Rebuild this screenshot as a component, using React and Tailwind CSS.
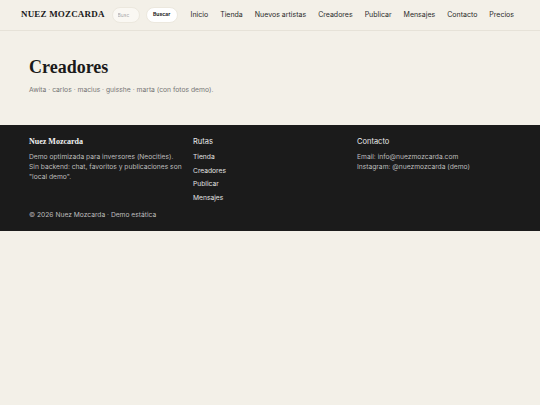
const serif = { fontFamily: '"Liberation Serif", "DejaVu Serif", serif' }

const navLinks = ['Inicio', 'Tienda', 'Nuevos artistas', 'Creadores', 'Publicar', 'Mensajes', 'Contacto', 'Precios']

function Header() {
  return (
    <header className="h-[31px] border-b border-[#e6e2d8] flex items-center pl-[21px] pr-[26px]">
      <a className="font-bold text-[9px] tracking-[0.02em] text-[#1a1a1a] whitespace-nowrap" style={serif}>
        NUEZ MOZCARDA
      </a>
      <div className="flex items-center ml-[7px] gap-[6px]">
        <input
          placeholder="Busc"
          className="w-[28px] h-[16px] rounded-full bg-[#faf8f3] border border-[#ece8de] px-[5px] text-[5px] text-[#999] placeholder:text-[#aaa] outline-none"
        />
        <button className="h-[16px] w-[32px] rounded-full bg-white border border-[#ece8de] text-[5px] font-bold text-[#1a1a1a]">
          Buscar
        </button>
      </div>
      <nav className="flex items-center ml-auto gap-[12px] text-[7px] text-[#2a2a2a]">
        {navLinks.map((l) => (
          <a key={l} className="whitespace-nowrap">{l}</a>
        ))}
      </nav>
    </header>
  )
}

function Footer() {
  return (
    <footer className="bg-[#1b1b1b] text-[#bdbdbd] px-[29px] pt-[12px] pb-[11px]">
      <div className="grid grid-cols-3 gap-[10px]">
        <div>
          <h3 className="text-[8px] font-bold text-[#f2f2f2] leading-[10px] mb-[5px]" style={serif}>Nuez Mozcarda</h3>
          <p className="text-[6.7px] leading-[10px] text-[#bdbdbd]">
            Demo optimizada para inversores (Neocities).
            <br />
            Sin backend: chat, favoritos y publicaciones son "local demo".
          </p>
        </div>
        <div>
          <h3 className="text-[7.5px] text-[#eaeaea] leading-[10px] mb-[4px]">Rutas</h3>
          <ul className="text-[6.7px] text-[#e2e2e2]">
            {['Tienda', 'Creadores', 'Publicar', 'Mensajes'].map((r) => (
              <li key={r} className="leading-[13.5px]">{r}</li>
            ))}
          </ul>
        </div>
        <div>
          <h3 className="text-[7.5px] text-[#eaeaea] leading-[10px] mb-[5px]">Contacto</h3>
          <p className="text-[6.7px] leading-[10px]">
            Email: info@nuezmozcarda.com
            <br />
            Instagram: @nuezmozcarda (demo)
          </p>
        </div>
      </div>
      <p className="mt-[5px] text-[6.7px] leading-[10px]">© 2026 Nuez Mozcarda · Demo estática</p>
    </footer>
  )
}

export default function App() {
  return (
    <div className="min-h-[405px] bg-[#f3f0e8]" style={{ fontFamily: 'Inter, "Liberation Sans", sans-serif' }}>
      <Header />
      <main className="px-[29px] pt-[24px] pb-[30px]">
        <h1 className="text-[18px] font-bold text-[#1a1a1a] leading-[24px]" style={serif}>Creadores</h1>
        <p className="mt-[6px] text-[6.75px] text-[#777] leading-[10px]">
          Awita · carlos · macius · guisshe · marta (con fotos demo).
        </p>
      </main>
      <Footer />
    </div>
  )
}
